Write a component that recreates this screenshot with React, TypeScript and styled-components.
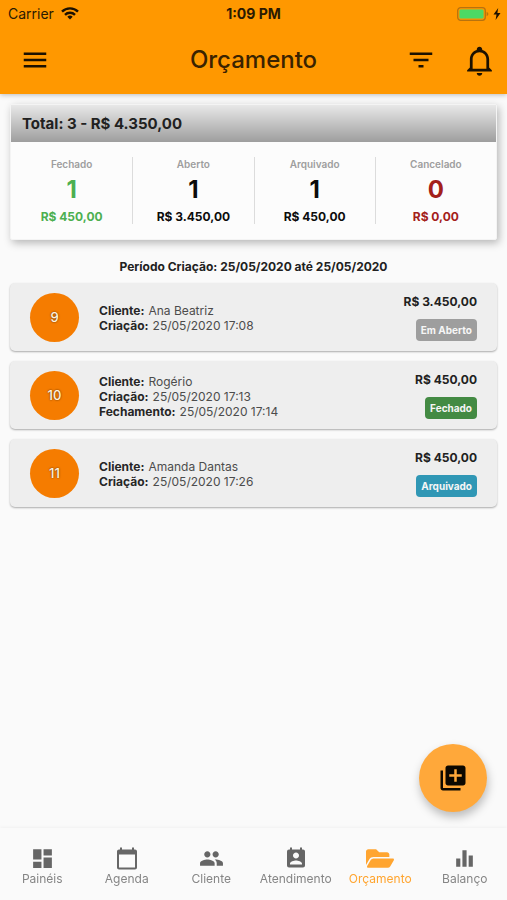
import React from "react";
import styled, { createGlobalStyle } from "styled-components";
import {
  MdMenu,
  MdFilterList,
  MdDashboard,
  MdCalendarToday,
  MdPeople,
  MdPermContactCalendar,
  MdEqualizer,
  MdAddToPhotos,
} from "react-icons/md";
import { FaFolderOpen } from "react-icons/fa";

const GlobalStyle = createGlobalStyle`
  *, *::before, *::after { box-sizing: border-box; }
  body {
    margin: 0;
    background: #fafafa;
    color: #212121;
    font-family: Inter, "Liberation Sans", sans-serif;
  }
  button { font: inherit; color: inherit; border: 0; padding: 0; background: none; cursor: pointer; }
`;

const Screen = styled.div`
  display: flex;
  flex-direction: column;
  min-height: 100vh;
`;

const Header = styled.header`
  background: #ff9800;
  box-shadow: 0 1px 5px rgba(0, 0, 0, 0.25);
`;

const StatusBar = styled.div`
  display: grid;
  grid-template-columns: 1fr auto 1fr;
  align-items: center;
  height: 27px;
  padding: 0 6px;
  font-size: 14px;
  color: #2a1a02;
`;

const Carrier = styled.span`
  display: flex;
  align-items: center;
  gap: 7px;
  padding-left: 2px;
`;

const Clock = styled.span`
  font-weight: 700;
`;

const Power = styled.span`
  display: flex;
  align-items: center;
  justify-content: flex-end;
  gap: 4px;
`;

const AppBar = styled.div`
  display: grid;
  grid-template-columns: 1fr auto 1fr;
  align-items: center;
  height: 67px;
  padding: 0 10px 1px;
`;

const Title = styled.h1`
  margin: 0;
  font-size: 24px;
  line-height: 32px;
  font-weight: 500;
  color: #3a2300;
`;

const Actions = styled.div`
  display: flex;
  justify-content: flex-end;
  gap: 22px;
`;

const IconButton = styled.button`
  display: flex;
  align-items: center;
  justify-content: center;
  width: 36px;
  height: 40px;
  && { color: #1c1100; }
`;

const MenuButton = styled(IconButton)`
  width: 50px;
`;

const Main = styled.main`
  flex: 1;
  padding: 10px 10px 16px;
`;

const Summary = styled.section`
  background: #fcfcfc;
  border: 1px solid #f4f4f4;
  border-radius: 2px;
  box-shadow: 2px 3px 9px rgba(0, 0, 0, 0.28);
`;

const SummaryTitle = styled.h2`
  margin: 0;
  padding: 0 11px;
  font-size: 15px;
  line-height: 37px;
  font-weight: 700;
  background: linear-gradient(#e8e8e8, #9e9e9e);
`;

const Stats = styled.div`
  display: grid;
  grid-template-columns: repeat(4, 1fr);
  padding: 15px 0;
`;

const Stat = styled.div<{ $color: string }>`
  display: flex;
  flex-direction: column;
  align-items: center;
  color: ${(p) => p.$color};
  font-weight: 600;

  & + & {
    border-left: 1px solid #dcdcdc;
  }
`;

const StatLabel = styled.span`
  font-size: 10px;
  line-height: 14px;
  color: #9e9e9e;
`;

const StatCount = styled.span`
  font-size: 24px;
  line-height: 38px;
  font-weight: 700;
`;

const StatAmount = styled.span`
  font-size: 12px;
  line-height: 15px;
  font-weight: 700;
`;

const Period = styled.p`
  margin: 18px 0 7px;
  text-align: center;
  font-size: 12px;
  line-height: 18px;
  font-weight: 700;
`;

const List = styled.ul`
  display: flex;
  flex-direction: column;
  gap: 10px;
  margin: 0;
  padding: 0;
  list-style: none;
`;

const Card = styled.li`
  display: flex;
  align-items: center;
  min-height: 68px;
  padding: 9px 20px;
  background: #eeeeee;
  border-radius: 5px;
  box-shadow: 0 1px 2px rgba(0, 0, 0, 0.32);
`;

const Avatar = styled.span`
  display: flex;
  align-items: center;
  justify-content: center;
  flex: none;
  width: 49px;
  height: 49px;
  border-radius: 50%;
  background: #f57c00;
  color: #fff3e0;
  font-size: 13px;
  font-weight: 500;
  text-shadow: 0 0 2px rgba(0, 0, 0, 0.7);
`;

const Details = styled.dl`
  flex: 1;
  margin: 2px 0 0 20px;
  font-size: 12px;
  line-height: 15px;
  color: #4c4c4c;
`;

const Detail = styled.div`
  display: flex;
  gap: 4px;

  dt { font-weight: 700; color: #262626; }
  dd { margin: 0; }
`;

const Value = styled.div`
  display: flex;
  flex-direction: column;
  align-items: flex-end;
  gap: 8px;
`;

const Price = styled.span`
  font-size: 12px;
  line-height: 18px;
  font-weight: 700;
`;

const Badge = styled.span<{ $color: string }>`
  padding: 0 5px;
  border-radius: 4px;
  background: ${(p) => p.$color};
  color: #f6f6f6;
  font-size: 10px;
  line-height: 22px;
  font-weight: 700;
`;

const Fab = styled.button`
  position: fixed;
  right: 20px;
  bottom: 88px;
  display: flex;
  align-items: center;
  justify-content: center;
  width: 68px;
  height: 68px;
  border-radius: 50%;
  && {
    background: #ffa83a;
    color: #0c0800;
  }
  box-shadow: 1px 5px 10px rgba(0, 0, 0, 0.25);
`;

const TabBar = styled.nav`
  position: sticky;
  bottom: 0;
  display: grid;
  grid-template-columns: repeat(6, 1fr);
  height: 72px;
  padding-top: 18px;
  background: #fafafa;
  box-shadow: 0 -1px 3px rgba(0, 0, 0, 0.04);
`;

const Tab = styled.a<{ $active?: boolean }>`
  display: flex;
  flex-direction: column;
  align-items: center;
  color: ${(p) => (p.$active ? "#ffa530" : "#666666")};
  text-decoration: none;

  svg { height: 25px; }
`;

const TabLabel = styled.span<{ $active?: boolean }>`
  font-size: 12px;
  line-height: 16px;
  color: ${(p) => (p.$active ? "#ffa530" : "#858585")};
`;

const WifiIcon = () => (
  <svg width="18" height="13" viewBox="0 0 18 13" fill="none" stroke="#1c1100" strokeWidth="2.4" aria-hidden="true">
    <path d="M1 4.7 A11.2 11.2 0 0 1 17 4.7" />
    <path d="M4 7.9 A7 7 0 0 1 14 7.9" />
    <path d="M9 12.6 L6.3 9.8 A3.8 3.8 0 0 1 11.7 9.8 Z" fill="#1c1100" stroke="none" />
  </svg>
);

const BatteryIcon = () => (
  <svg width="32" height="14" viewBox="0 0 32 14" aria-hidden="true">
    <rect x="0.7" y="0.7" width="27.6" height="12.6" rx="3" fill="none" stroke="#b8720e" strokeWidth="1.3" />
    <rect x="2.4" y="2.4" width="24.2" height="9.2" rx="1.5" fill="#4cd964" />
    <path d="M29.6 4.7 Q31.4 5.4 31.4 7 Q31.4 8.6 29.6 9.3 Z" fill="#b8720e" />
  </svg>
);

const BoltIcon = () => (
  <svg width="8" height="12" viewBox="0 0 8 12" fill="#1c1100" aria-hidden="true">
    <path d="M5.2 0 L0.5 6.6 H3.5 L2.6 12 L7.5 5 H4.4 Z" />
  </svg>
);

const BellIcon = () => (
  <svg width="33" height="33" viewBox="0 0 24 24" fill="currentColor" aria-hidden="true">
    <path d="M10 21H14C14 22.1 13.1 23 12 23S10 22.1 10 21M21 19V20H3V19L5 17V11C5 7.9 7 5.2 10 4.3V4C10 2.9 10.9 2 12 2S14 2.9 14 4V4.3C17 5.2 19 7.9 19 11V17L21 19M17 11C17 8.2 14.8 6 12 6S7 8.2 7 11V18H17V11Z" />
  </svg>
);

const stats = [
  { label: "Fechado", count: 1, amount: "R$ 450,00", color: "#4caf50" },
  { label: "Aberto", count: 1, amount: "R$ 3.450,00", color: "#0c0c0c" },
  { label: "Arquivado", count: 1, amount: "R$ 450,00", color: "#0c0c0c" },
  { label: "Cancelado", count: 0, amount: "R$ 0,00", color: "#a3201a" },
];

const quotes = [
  {
    id: 9,
    details: [["Cliente:", "Ana Beatriz"], ["Criação:", "25/05/2020 17:08"]],
    price: "R$ 3.450,00",
    status: "Em Aberto",
    color: "#9e9e9e",
  },
  {
    id: 10,
    details: [["Cliente:", "Rogério"], ["Criação:", "25/05/2020 17:13"], ["Fechamento:", "25/05/2020 17:14"]],
    price: "R$ 450,00",
    status: "Fechado",
    color: "#438a43",
  },
  {
    id: 11,
    details: [["Cliente:", "Amanda Dantas"], ["Criação:", "25/05/2020 17:26"]],
    price: "R$ 450,00",
    status: "Arquivado",
    color: "#3097b5",
  },
];

const tabs = [
  { label: "Painéis", icon: <MdDashboard size={25} /> },
  { label: "Agenda", icon: <MdCalendarToday size={24} /> },
  { label: "Cliente", icon: <MdPeople size={25} /> },
  { label: "Atendimento", icon: <MdPermContactCalendar size={24} /> },
  { label: "Orçamento", icon: <FaFolderOpen size={28} />, active: true },
  { label: "Balanço", icon: <MdEqualizer size={25} /> },
];

export default function App() {
  return (
    <Screen>
      <GlobalStyle />
      <Header>
        <StatusBar>
          <Carrier>Carrier <WifiIcon /></Carrier>
          <Clock>1:09 PM</Clock>
          <Power><BatteryIcon /><BoltIcon /></Power>
        </StatusBar>
        <AppBar>
          <MenuButton aria-label="Menu"><MdMenu size={30} /></MenuButton>
          <Title>Orçamento</Title>
          <Actions>
            <IconButton aria-label="Filtrar"><MdFilterList size={30} /></IconButton>
            <IconButton aria-label="Notificações"><BellIcon /></IconButton>
          </Actions>
        </AppBar>
      </Header>

      <Main>
        <Summary>
          <SummaryTitle>Total: 3 - R$ 4.350,00</SummaryTitle>
          <Stats>
            {stats.map((s) => (
              <Stat key={s.label} $color={s.color}>
                <StatLabel>{s.label}</StatLabel>
                <StatCount>{s.count}</StatCount>
                <StatAmount>{s.amount}</StatAmount>
              </Stat>
            ))}
          </Stats>
        </Summary>

        <Period>Período Criação: 25/05/2020 até 25/05/2020</Period>

        <List>
          {quotes.map((q) => (
            <Card key={q.id}>
              <Avatar>{q.id}</Avatar>
              <Details>
                {q.details.map(([term, text]) => (
                  <Detail key={term}>
                    <dt>{term}</dt>
                    <dd>{text}</dd>
                  </Detail>
                ))}
              </Details>
              <Value>
                <Price>{q.price}</Price>
                <Badge $color={q.color}>{q.status}</Badge>
              </Value>
            </Card>
          ))}
        </List>
      </Main>

      <Fab aria-label="Novo orçamento"><MdAddToPhotos size={30} /></Fab>

      <TabBar>
        {tabs.map((t) => (
          <Tab key={t.label} href="#" $active={t.active} aria-current={t.active ? "page" : undefined}>
            {t.icon}
            <TabLabel $active={t.active}>{t.label}</TabLabel>
          </Tab>
        ))}
      </TabBar>
    </Screen>
  );
}
